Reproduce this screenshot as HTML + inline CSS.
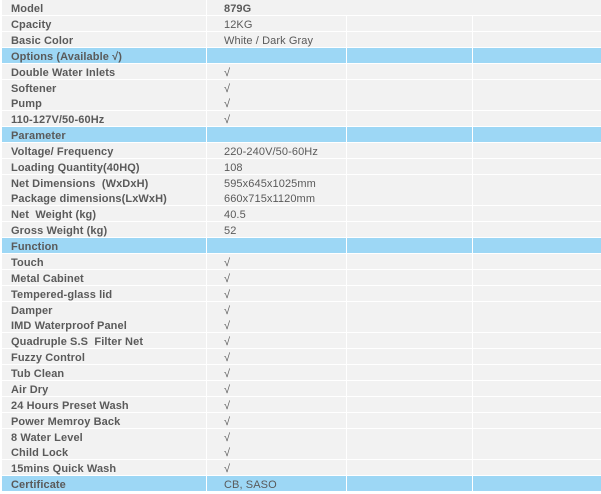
<!DOCTYPE html>
<html><head><meta charset="utf-8"><style>
html,body{margin:0;padding:0;background:#fff;width:601px;height:492px;overflow:hidden}
.r{position:absolute;left:2px;width:599px;height:15px}
.c{position:absolute;top:0;height:15px;background:#f2f2f2;font:bold 11px/18px "Liberation Sans",sans-serif;color:#5a5a5a;white-space:nowrap;letter-spacing:0.1px}
.a{left:0;width:204px;padding-left:9px;box-sizing:border-box}
.b{left:205px;width:139px;padding-left:17px;box-sizing:border-box;font-weight:normal}
.d{left:345px;width:125px}
.e{left:471px;width:128px}
.bl .c{background:#9dd7f5}
.w{left:205px;width:394px;padding-left:17px;box-sizing:border-box}
</style></head><body>
<div class="r" style="top:0"><div class="c a">Model</div><div class="c w">879G</div></div>
<div class="r" style="top:16px"><div class="c a">Cpacity</div><div class="c b">12KG</div><div class="c d"></div><div class="c e"></div></div>
<div class="r" style="top:32px"><div class="c a">Basic Color</div><div class="c b">White / Dark Gray</div><div class="c d"></div><div class="c e"></div></div>
<div class="r bl" style="top:48px"><div class="c a">Options (Available √)</div><div class="c b"></div><div class="c d"></div><div class="c e"></div></div>
<div class="r" style="top:64px"><div class="c a">Double Water Inlets</div><div class="c b">√</div><div class="c d"></div><div class="c e"></div></div>
<div class="r" style="top:80px"><div class="c a">Softener</div><div class="c b">√</div><div class="c d"></div><div class="c e"></div></div>
<div class="r" style="top:95px"><div class="c a">Pump</div><div class="c b">√</div><div class="c d"></div><div class="c e"></div></div>
<div class="r" style="top:111px"><div class="c a">110-127V/50-60Hz</div><div class="c b">√</div><div class="c d"></div><div class="c e"></div></div>
<div class="r bl" style="top:127px"><div class="c a">Parameter</div><div class="c b"></div><div class="c d"></div><div class="c e"></div></div>
<div class="r" style="top:143px"><div class="c a">Voltage/ Frequency</div><div class="c b">220-240V/50-60Hz</div><div class="c d"></div><div class="c e"></div></div>
<div class="r" style="top:159px"><div class="c a">Loading Quantity(40HQ)</div><div class="c b">108</div><div class="c d"></div><div class="c e"></div></div>
<div class="r" style="top:175px"><div class="c a">Net Dimensions &nbsp;(WxDxH)</div><div class="c b">595x645x1025mm</div><div class="c d"></div><div class="c e"></div></div>
<div class="r" style="top:190px"><div class="c a">Package dimensions(LxWxH)</div><div class="c b">660x715x1120mm</div><div class="c d"></div><div class="c e"></div></div>
<div class="r" style="top:206px"><div class="c a">Net &nbsp;Weight (kg)</div><div class="c b">40.5</div><div class="c d"></div><div class="c e"></div></div>
<div class="r" style="top:222px"><div class="c a">Gross Weight (kg)</div><div class="c b">52</div><div class="c d"></div><div class="c e"></div></div>
<div class="r bl" style="top:238px"><div class="c a">Function</div><div class="c b"></div><div class="c d"></div><div class="c e"></div></div>
<div class="r" style="top:254px"><div class="c a">Touch</div><div class="c b">√</div><div class="c d"></div><div class="c e"></div></div>
<div class="r" style="top:270px"><div class="c a">Metal Cabinet</div><div class="c b">√</div><div class="c d"></div><div class="c e"></div></div>
<div class="r" style="top:286px"><div class="c a">Tempered-glass lid</div><div class="c b">√</div><div class="c d"></div><div class="c e"></div></div>
<div class="r" style="top:302px"><div class="c a">Damper</div><div class="c b">√</div><div class="c d"></div><div class="c e"></div></div>
<div class="r" style="top:317px"><div class="c a">IMD Waterproof Panel</div><div class="c b">√</div><div class="c d"></div><div class="c e"></div></div>
<div class="r" style="top:333px"><div class="c a">Quadruple S.S &nbsp;Filter Net</div><div class="c b">√</div><div class="c d"></div><div class="c e"></div></div>
<div class="r" style="top:349px"><div class="c a">Fuzzy Control</div><div class="c b">√</div><div class="c d"></div><div class="c e"></div></div>
<div class="r" style="top:365px"><div class="c a">Tub Clean</div><div class="c b">√</div><div class="c d"></div><div class="c e"></div></div>
<div class="r" style="top:381px"><div class="c a">Air Dry</div><div class="c b">√</div><div class="c d"></div><div class="c e"></div></div>
<div class="r" style="top:397px"><div class="c a">24 Hours Preset Wash</div><div class="c b">√</div><div class="c d"></div><div class="c e"></div></div>
<div class="r" style="top:413px"><div class="c a">Power Memroy Back</div><div class="c b">√</div><div class="c d"></div><div class="c e"></div></div>
<div class="r" style="top:429px"><div class="c a">8 Water Level</div><div class="c b">√</div><div class="c d"></div><div class="c e"></div></div>
<div class="r" style="top:444px"><div class="c a">Child Lock</div><div class="c b">√</div><div class="c d"></div><div class="c e"></div></div>
<div class="r" style="top:460px"><div class="c a">15mins Quick Wash</div><div class="c b">√</div><div class="c d"></div><div class="c e"></div></div>
<div class="r bl" style="top:476px"><div class="c a">Certificate</div><div class="c b">CB, SASO</div><div class="c d"></div><div class="c e"></div></div>
</body></html>
